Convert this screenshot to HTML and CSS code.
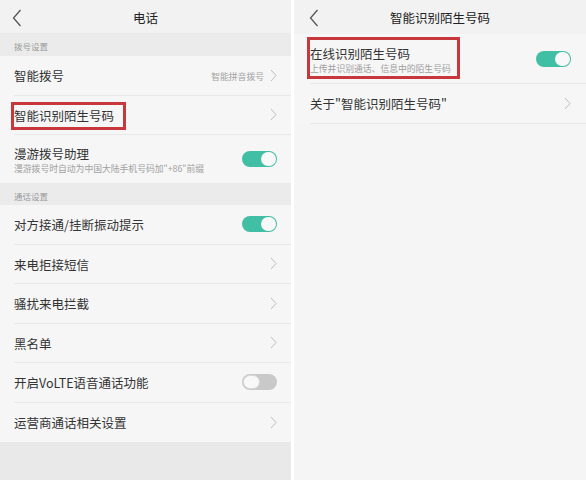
FILE: index.html
```html
<!DOCTYPE html>
<html lang="zh-CN">
<head>
<meta charset="utf-8">
<title>电话</title>
<link rel="stylesheet" href="styles.css">
</head>
<body>
<div class="screen">
  <section class="panel panel-left">
    <header class="bar">
      <svg class="back" width="10" height="18" viewBox="0 0 10 18"><polyline points="8.5,1 1.5,9 8.5,17" fill="none" stroke="#555" stroke-width="1.3"/></svg>
      <h1 class="bar-title">电话</h1>
    </header>
    <div class="group-title">拨号设置</div>
    <ul class="list">
      <li class="row">
        <span class="label">智能拨号</span>
        <span class="value">智能拼音拨号</span>
        <svg class="chev" width="7" height="13" viewBox="0 0 7 13"><polyline points="1,1 6,6.5 1,12" fill="none" stroke="#bdbdbd" stroke-width="1"/></svg>
      </li>
      <li class="row">
        <span class="label marked">智能识别陌生号码</span>
        <svg class="chev" width="7" height="13" viewBox="0 0 7 13"><polyline points="1,1 6,6.5 1,12" fill="none" stroke="#bdbdbd" stroke-width="1"/></svg>
      </li>
      <li class="row row-tall">
        <div class="texts">
          <span class="label">漫游拨号助理</span>
          <span class="sub">漫游拨号时自动为中国大陆手机号码加"+86"前缀</span>
        </div>
        <span class="switch on"><span class="knob"></span></span>
      </li>
    </ul>
    <div class="group-title group-title-2">通话设置</div>
    <ul class="list">
      <li class="row">
        <span class="label">对方接通/挂断振动提示</span>
        <span class="switch on"><span class="knob"></span></span>
      </li>
      <li class="row">
        <span class="label">来电拒接短信</span>
        <svg class="chev" width="7" height="13" viewBox="0 0 7 13"><polyline points="1,1 6,6.5 1,12" fill="none" stroke="#bdbdbd" stroke-width="1"/></svg>
      </li>
      <li class="row">
        <span class="label">骚扰来电拦截</span>
        <svg class="chev" width="7" height="13" viewBox="0 0 7 13"><polyline points="1,1 6,6.5 1,12" fill="none" stroke="#bdbdbd" stroke-width="1"/></svg>
      </li>
      <li class="row">
        <span class="label">黑名单</span>
        <svg class="chev" width="7" height="13" viewBox="0 0 7 13"><polyline points="1,1 6,6.5 1,12" fill="none" stroke="#bdbdbd" stroke-width="1"/></svg>
      </li>
      <li class="row">
        <span class="label">开启VoLTE语音通话功能</span>
        <span class="switch off"><span class="knob"></span></span>
      </li>
      <li class="row">
        <span class="label">运营商通话相关设置</span>
        <svg class="chev" width="7" height="13" viewBox="0 0 7 13"><polyline points="1,1 6,6.5 1,12" fill="none" stroke="#bdbdbd" stroke-width="1"/></svg>
      </li>
    </ul>
    <div class="filler"></div>
  </section>

  <section class="panel panel-right">
    <header class="bar">
      <svg class="back" width="10" height="18" viewBox="0 0 10 18"><polyline points="8.5,1 1.5,9 8.5,17" fill="none" stroke="#555" stroke-width="1.3"/></svg>
      <h1 class="bar-title">智能识别陌生号码</h1>
    </header>
    <ul class="list">
      <li class="row row-online">
        <div class="texts marked-block">
          <span class="label">在线识别陌生号码</span>
          <span class="sub">上传并识别通话、信息中的陌生号码</span>
        </div>
        <span class="switch on"><span class="knob"></span></span>
      </li>
      <li class="row">
        <span class="label">关于"智能识别陌生号码"</span>
        <svg class="chev" width="7" height="13" viewBox="0 0 7 13"><polyline points="1,1 6,6.5 1,12" fill="none" stroke="#bdbdbd" stroke-width="1"/></svg>
      </li>
    </ul>
  </section>
</div>
</body>
</html>
```

FILE: styles.css
```css
* { box-sizing: border-box; }
html, body {
  margin: 0;
  padding: 0;
  background: #ffffff;
}
body {
  font-family: "Noto Sans CJK SC", "Noto Sans", sans-serif;
  color: #333;
}
.screen {
  display: flex;
  gap: 3px;
  width: 586px;
  height: 480px;
  overflow: hidden;
}
.panel {
  display: flex;
  flex-direction: column;
  background: #f5f5f5;
  height: 480px;
}
.panel-left { width: 291px; }
.panel-right { flex: 1; }

.bar {
  position: relative;
  height: 33px;
  display: flex;
  align-items: center;
  justify-content: center;
  background: #f2f2f2;
  flex: none;
}
.panel-right .bar { height: 34px; }
.back {
  position: absolute;
  left: 12px;
  top: 9px;
}
.panel-right .back { left: 15px; }
.bar-title {
  margin: 0;
  font-size: 12.5px;
  font-weight: 400;
  color: #222;
  line-height: 1;
  padding-top: 3px;
}

.group-title {
  height: 23px;
  line-height: 19px;
  padding-top: 4px;
  padding-left: 14px;
  font-size: 8.5px;
  color: #9a9a9a;
  background: #ebebeb;
  flex: none;
}
.group-title-2 { height: 22px; line-height: 18px; }

.list {
  list-style: none;
  margin: 0;
  padding: 0;
  background: #f6f6f6;
  flex: none;
}
.row {
  display: flex;
  align-items: center;
  height: 39.5px;
  margin-left: 14px;
  padding-right: 14px;
  padding-top: 2px;
  border-bottom: 1px solid #e8e8e8;
}
.panel-left .list .row:last-child { border-bottom: none; }
.panel-right .row { margin-left: 16px; padding-right: 15px; }
.row-tall { height: 48px; padding-top: 3px; }
.row-online { height: 50px; padding-top: 4px; }

.label {
  font-size: 12.5px;
  line-height: 16px;
  color: #333;
  white-space: nowrap;
}
.texts {
  display: flex;
  flex-direction: column;
  gap: 1px;
}
.sub {
  font-size: 8.8px;
  line-height: 12px;
  color: #a0a0a0;
  white-space: nowrap;
}
.value {
  margin-left: auto;
  margin-right: 6px;
  font-size: 8.8px;
  color: #a3a3a3;
}
.chev { margin-left: auto; flex: none; margin-top: -2px; }
.value + .chev { margin-left: 0; }

.switch {
  position: relative;
  margin-left: auto;
  margin-top: -2px;
  flex: none;
  width: 35px;
  height: 16px;
  border-radius: 8px;
}
.row-online .switch, .row-tall .switch { margin-top: -4px; }
.switch.on { background: #41bfa4; }
.switch.off { background: #c9c9c9; }
.knob {
  position: absolute;
  top: 1px;
  width: 15px;
  height: 14px;
  border-radius: 7px;
  background: #f8f8f8;
}
.switch.on .knob { right: 1px; }
.switch.off .knob { left: 1px; border: 1px solid #d8d8d8; width: 17px; }

.marked { position: relative; }
.marked::after {
  content: "";
  position: absolute;
  left: -3px;
  right: -12px;
  top: -6px;
  bottom: -6px;
  border: 3px solid #c7373b;
}
.marked-block { position: relative; }
.marked-block::after {
  content: "";
  position: absolute;
  left: -3px;
  right: -9px;
  top: -9px;
  bottom: -4px;
  border: 3px solid #c7373b;
}

.filler {
  flex: 1;
  background: #e9e9e9;
}
```
